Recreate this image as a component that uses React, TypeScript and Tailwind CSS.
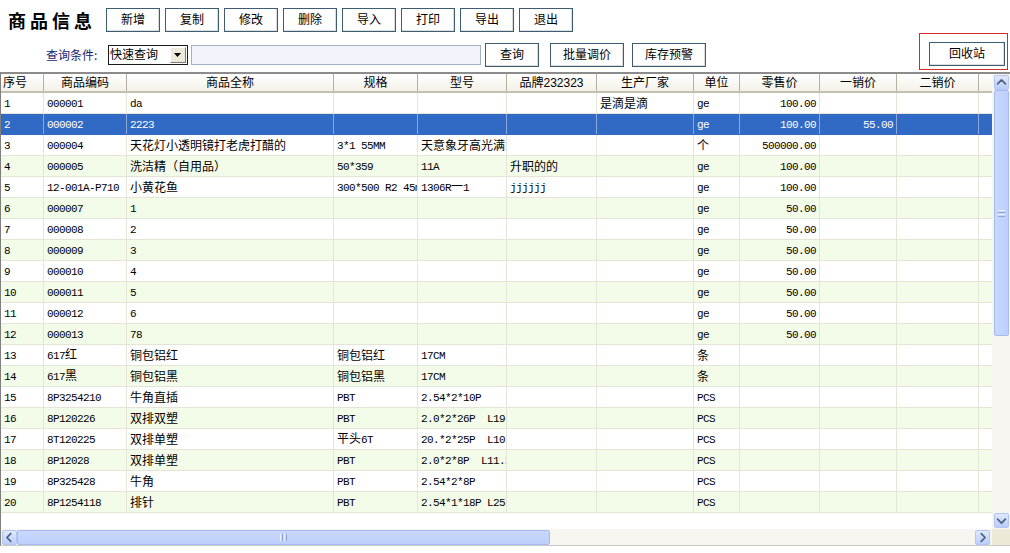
import React from "react";

const COLS =
  "grid grid-cols-[43px_83px_207px_84px_89px_90px_97px_46px_80px_77px_82px_13px]";

const headers = [
  "序号",
  "商品编码",
  "商品全称",
  "规格",
  "型号",
  "品牌232323",
  "生产厂家",
  "单位",
  "零售价",
  "一销价",
  "二销价",
  "",
];

const rows: string[][] = [
  ["1", "000001", "da", "", "", "", "是滴是滴", "ge", "100.00", "", ""],
  ["2", "000002", "2223", "", "", "", "", "ge", "100.00", "55.00", ""],
  ["3", "000004", "天花灯小透明镜打老虎打醋的", "3*1 55MM", "天意象牙高光满意", "", "", "个", "500000.00", "", ""],
  ["4", "000005", "洗洁精（自用品）", "50*359", "11A", "升职的的", "", "ge", "100.00", "", ""],
  ["5", "12-001A-P710", "小黄花鱼", "300*500 R2 45mm", "1306R一1", "jjjjjj", "", "ge", "100.00", "", ""],
  ["6", "000007", "1", "", "", "", "", "ge", "50.00", "", ""],
  ["7", "000008", "2", "", "", "", "", "ge", "50.00", "", ""],
  ["8", "000009", "3", "", "", "", "", "ge", "50.00", "", ""],
  ["9", "000010", "4", "", "", "", "", "ge", "50.00", "", ""],
  ["10", "000011", "5", "", "", "", "", "ge", "50.00", "", ""],
  ["11", "000012", "6", "", "", "", "", "ge", "50.00", "", ""],
  ["12", "000013", "78", "", "", "", "", "ge", "50.00", "", ""],
  ["13", "617红", "铜包铝红", "铜包铝红", "17CM", "", "", "条", "", "", ""],
  ["14", "617黑", "铜包铝黑", "铜包铝黑", "17CM", "", "", "条", "", "", ""],
  ["15", "8P3254210", "牛角直插", "PBT", "2.54*2*10P", "", "", "PCS", "", "", ""],
  ["16", "8P120226", "双排双塑", "PBT", "2.0*2*26P  L19", "", "", "PCS", "", "", ""],
  ["17", "8T120225", "双排单塑", "平头6T", "20.*2*25P  L10", "", "", "PCS", "", "", ""],
  ["18", "8P12028", "双排单塑", "PBT", "2.0*2*8P  L11.2", "", "", "PCS", "", "", ""],
  ["19", "8P325428", "牛角", "PBT", "2.54*2*8P", "", "", "PCS", "", "", ""],
  ["20", "8P1254118", "排针", "PBT", "2.54*1*18P L25", "", "", "PCS", "", "", ""],
];

function Txt({ s }: { s: string }) {
  const parts = s.match(/[\x20-\x7e]+|[^\x20-\x7e]+/g) || [];
  return (
    <span className="leading-[14px] whitespace-pre">
      {parts.map((p, i) =>
        /^[\x20-\x7e]/.test(p) ? (
          <span
            key={i}
            className="font-['Liberation_Mono',monospace] text-[11px] tracking-[-0.6px]"
          >
            {p}
          </span>
        ) : (
          <span key={i} className="font-['Noto_Sans_CJK_SC',sans-serif] text-[12px]">
            {p}
          </span>
        )
      )}
    </span>
  );
}

function Btn({ label, w }: { label: string; w: string }) {
  return (
    <div
      className={`${w} h-[24px] shrink-0 border border-[#3e5d70] bg-white flex items-center justify-center text-[12px] leading-none text-black shadow-[inset_-1px_-1px_0_#dcdcdc]`}
    >
      {label}
    </div>
  );
}

function ArrowBtn({ dir }: { dir: "up" | "down" | "left" | "right" }) {
  const d =
    dir === "up"
      ? "M3 9 L7.5 4.5 L12 9"
      : dir === "down"
      ? "M3 6 L7.5 10.5 L12 6"
      : dir === "left"
      ? "M9 3 L4.5 7.5 L9 12"
      : "M6 3 L10.5 7.5 L6 12";
  return (
    <div className="w-[15px] h-[15px] shrink-0 rounded-[2px] border border-[#b3c6f3] bg-gradient-to-b from-[#e0e9fd] to-[#b9cdf8] flex items-center justify-center">
      <svg width="15" height="15" viewBox="0 0 15 15">
        <path d={d} fill="none" stroke="#4d6185" strokeWidth="2" strokeLinecap="round" strokeLinejoin="round" />
      </svg>
    </div>
  );
}

export default function App() {
  const topButtons = ["新增", "复制", "修改", "删除", "导入", "打印", "导出", "退出"];
  return (
    <div className="w-[1010px] h-[553px] bg-white overflow-hidden font-['Liberation_Sans','Noto_Sans_CJK_SC',sans-serif] text-black">
      {/* Top toolbar */}
      <div className="h-[72px] flex flex-col">
        <div className="flex items-center h-[24px] mt-[8px]">
          <div className="w-[106px] pl-[8px] text-[18px] tracking-[4px] font-bold leading-none font-['Noto_Sans_CJK_SC',sans-serif]">
            商品信息
          </div>
          <div className="flex gap-[5px]">
            {topButtons.map((b) => (
              <Btn key={b} label={b} w="w-[54px]" />
            ))}
          </div>
        </div>
        <div className="flex h-[40px]">
          <div className="flex items-center h-[24px] mt-[11px]">
            <div className="ml-[46px] w-[62px] text-[12px] text-[#17246e] leading-none font-['Noto_Sans_CJK_SC',sans-serif]">
              查询条件:
            </div>
            <div className="w-[80px] h-[20px] border border-[#1a1a1a] bg-white flex items-center">
              <span className="pl-[1px] text-[12px] leading-none flex-1">快速查询</span>
              <div className="w-[16px] h-[16px] mr-[1px] bg-[#ece9d8] border border-t-white border-l-white border-r-[#7a7a7a] border-b-[#7a7a7a] flex items-center justify-center">
                <svg width="8" height="5" viewBox="0 0 8 5">
                  <path d="M0 0 H7 L3.5 4 Z" fill="#000" />
                </svg>
              </div>
            </div>
            <div className="ml-[3px] w-[290px] h-[20px] border border-[#9fb2c6] bg-[#f3f3fb]" />
            <div className="ml-[4px]">
              <Btn label="查询" w="w-[54px]" />
            </div>
            <div className="ml-[11px]">
              <Btn label="批量调价" w="w-[74px]" />
            </div>
            <div className="ml-[8px]">
              <Btn label="库存预警" w="w-[74px]" />
            </div>
          </div>
          <div className="ml-auto mr-[2px] mt-[1px] h-[37px] w-[89px] bg-[#d42a2a] p-[1px]">
            <div className="w-full h-full bg-white pl-[9px] pt-[8px]">
              <Btn label="回收站" w="w-[76px]" />
            </div>
          </div>
        </div>
      </div>

      {/* Grid */}
      <div className="h-[474px] border-l border-l-[#7f7f7f] border-t-2 border-t-[#8c8c8c] border-b border-b-[#c8c8c8] flex flex-col">
        <div className="flex h-[455px]">
          <div className="w-[991px] flex flex-col">
            {/* header */}
            <div className={`${COLS} h-[19px] border-b-2 border-b-[#c3c0b0] bg-gradient-to-b from-white to-[#f3f1e8]`}>
              {headers.map((h, i) => (
                <div
                  key={i}
                  className={`flex items-center ${i === 0 ? "justify-start pl-[2px]" : "justify-center"} text-[12px] leading-none overflow-hidden whitespace-nowrap ${
                    i < headers.length - 1 ? "border-r border-r-[#b3b0a2]" : ""
                  }`}
                >
                  {h}
                </div>
              ))}
            </div>
            {/* rows */}
            {rows.map((r, ri) => {
              const selected = ri === 1;
              const even = ri % 2 === 1;
              const rowBg = selected ? "bg-[#316ac5] text-white" : even ? "bg-[#f3fbe9]" : "bg-white";
              return (
                <div key={ri} className={`${COLS} h-[21px] border-b ${selected ? "border-b-[#316ac5]" : "border-b-[#e6e4d6]"} ${rowBg}`}>
                  {[...r, ""].map((c, ci) => {
                    const right = ci === 8 || ci === 9;
                    return (
                      <div
                        key={ci}
                        className={`flex items-center overflow-hidden ${right ? "justify-end pr-[3px]" : "pl-[3px]"} ${
                          ci < 11 ? (selected ? "border-r border-r-[#8aa8dc]" : "border-r border-r-[#e6e4d6]") : ""
                        }`}
                      >
                        {c ? <Txt s={c} /> : null}
                      </div>
                    );
                  })}
                </div>
              );
            })}
            <div className="flex-1 bg-white" />
          </div>
          {/* vertical scrollbar */}
          <div className="flex-1 flex flex-col items-center bg-[#f6f5f0] pt-[1px] pb-[1px]">
            <ArrowBtn dir="up" />
            <div className="w-[15px] h-[246px] rounded-[2px] border border-[#a6bbef] bg-gradient-to-r from-[#c9d8fd] to-[#bccffb] flex flex-col items-center justify-center gap-[1px]">
              <div className="w-[7px] h-[1px] bg-[#eef3ff]" />
              <div className="w-[7px] h-[1px] bg-[#8ea5dc]" />
              <div className="w-[7px] h-[1px] bg-[#eef3ff]" />
              <div className="w-[7px] h-[1px] bg-[#8ea5dc]" />
            </div>
            <div className="flex-1" />
            <ArrowBtn dir="down" />
          </div>
        </div>
        {/* horizontal scrollbar */}
        <div className="flex h-[16px]">
          <div className="w-[991px] flex items-center bg-[#f6f5f0] pl-[1px] pr-[2px]">
            <ArrowBtn dir="left" />
            <div className="w-[533px] h-[15px] rounded-[2px] border border-[#a6bbef] bg-gradient-to-b from-[#c9d8fd] to-[#bccffb] flex items-center justify-center gap-[1px]">
              <div className="w-[1px] h-[7px] bg-[#eef3ff]" />
              <div className="w-[1px] h-[7px] bg-[#8ea5dc]" />
              <div className="w-[1px] h-[7px] bg-[#eef3ff]" />
              <div className="w-[1px] h-[7px] bg-[#8ea5dc]" />
            </div>
            <div className="flex-1" />
            <ArrowBtn dir="right" />
          </div>
          <div className="flex-1 bg-[#ece9d8]" />
        </div>
      </div>
    </div>
  );
}
